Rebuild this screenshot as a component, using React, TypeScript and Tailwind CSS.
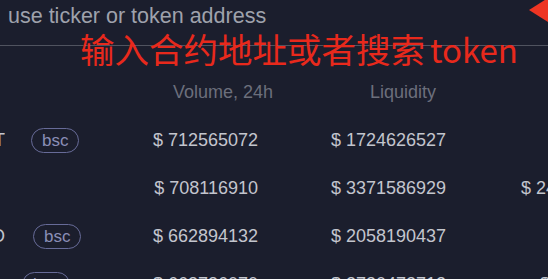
type Row = { name?: string; pill?: number; volume: string; liquidity: string; extra?: string; extraOffset?: number };

const rows: Row[] = [
  { name: "USDT", pill: 26, volume: "$ 712565072", liquidity: "$ 1724626527" },
  { volume: "$ 708116910", liquidity: "$ 3371586929", extra: "$ 2456821093", extraOffset: 0 },
  { name: "BUSO", pill: 28, volume: "$ 662894132", liquidity: "$ 2058190437" },
  { pill: 17, volume: "$ 663736070", liquidity: "$ 2730472712", extra: "$ 1093", extraOffset: 19 },
];

function Pill() {
  return (
    <span className="h-[25px] px-[10px] flex items-center rounded-full border-[1.5px] border-[#676b98] text-[17px] leading-none text-[#8a8eb6]">
      bsc
    </span>
  );
}

export default function App() {
  return (
    <div
      className="w-[548px] h-[279px] overflow-hidden relative bg-[#1b1e2d] text-[#c3c5cd]"
      style={{ fontFamily: '"Liberation Sans", Arial, "Noto Sans CJK SC", sans-serif' }}
    >
      {/* search field */}
      <div className="h-[46px] border-b border-[#50535f] pl-[8px] pt-[4px]">
        <span className="text-[21.5px] leading-[24px] text-[#9fa2ac]">use ticker or token address</span>
      </div>

      {/* header */}
      <div className="mt-[22px] h-[48px] flex items-center text-[18px] text-[#6c6f7c]">
        <span className="ml-[173px] w-[197px] shrink-0">Volume, 24h</span>
        <span className="shrink-0">Liquidity</span>
      </div>

      {rows.map((r, i) => (
        <div key={i} className="h-[48px] flex items-center text-[18px] whitespace-nowrap">
          <div className="w-[120px] shrink-0 flex items-center">
            <div className="w-[5px] shrink-0 flex justify-end overflow-hidden">
              <span className="text-[18px] text-[#c3c5cd]">{r.name ?? ""}</span>
            </div>
            {r.pill !== undefined && (
              <div className="shrink-0" style={{ marginLeft: r.pill }}>
                <Pill />
              </div>
            )}
          </div>
          <div className="w-[138px] shrink-0 text-right">{r.volume}</div>
          <div className="ml-[73px] w-[190px] shrink-0">{r.liquidity}</div>
          {r.extra && (
            <div className="shrink-0" style={{ marginLeft: r.extraOffset }}>
              {r.extra}
            </div>
          )}
        </div>
      ))}

      {/* annotation */}
      <div
        className="absolute left-[80px] top-[28px] text-[34.5px] leading-[40px] text-[#e8291c] whitespace-nowrap"
        style={{ fontFamily: '"Noto Sans CJK SC", "Liberation Sans", sans-serif' }}
      >
        输入合约地址或者搜索<span className="ml-[5px] text-[33px]">token</span>
      </div>
      <svg className="absolute right-0 top-0" width="19" height="24" viewBox="0 0 19 24">
        <polygon points="0,10 19,-2 19,22" fill="#ee3523" />
      </svg>
    </div>
  );
}
